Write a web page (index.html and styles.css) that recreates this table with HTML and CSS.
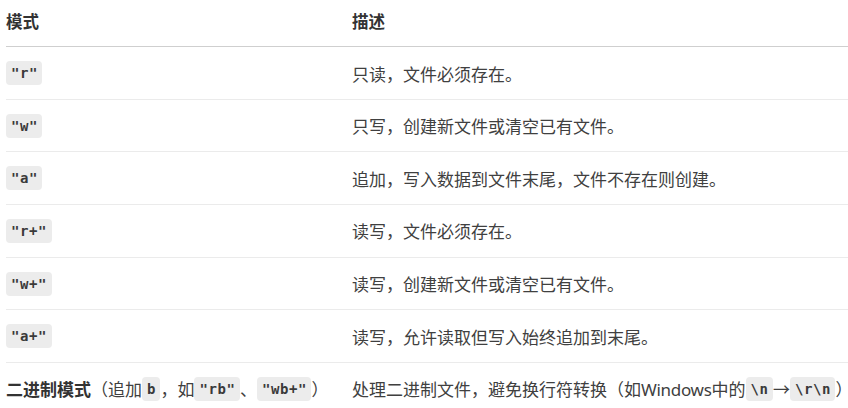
FILE: index.html
```html
<!DOCTYPE html>
<html lang="zh-CN">
<head>
<meta charset="utf-8">
<title>文件模式</title>
<link rel="stylesheet" href="styles.css">
</head>
<body>
<table class="modes">
  <thead>
    <tr><th class="c1"><div class="cell">模式</div></th><th class="c2"><div class="cell">描述</div></th></tr>
  </thead>
  <tbody>
    <tr><td><div class="cell"><code>"r"</code></div></td><td><div class="cell">只读，文件必须存在。</div></td></tr>
    <tr><td><div class="cell"><code>"w"</code></div></td><td><div class="cell">只写，创建新文件或清空已有文件。</div></td></tr>
    <tr><td><div class="cell"><code>"a"</code></div></td><td><div class="cell">追加，写入数据到文件末尾，文件不存在则创建。</div></td></tr>
    <tr><td><div class="cell"><code>"r+"</code></div></td><td><div class="cell">读写，文件必须存在。</div></td></tr>
    <tr><td><div class="cell"><code>"w+"</code></div></td><td><div class="cell">读写，创建新文件或清空已有文件。</div></td></tr>
    <tr><td><div class="cell"><code>"a+"</code></div></td><td><div class="cell">读写，允许读取但写入始终追加到末尾。</div></td></tr>
    <tr><td><div class="cell"><strong>二进制模式</strong><span>（追加</span><code>b</code><span>，如</span><code>"rb"</code><span>、</span><code>"wb+"</code><span>）</span></div></td><td><div class="cell"><span>处理二进制文件，避免换行符转换（如<span class="latin">Windows</span>中的</span><code>\n</code><span class="arrow">→</span><code>\r\n</code><span>）</span></div></td></tr>
  </tbody>
</table>
</body>
</html>
```
FILE: styles.css
```css
html, body {
  margin: 0;
  padding: 0;
  background: #ffffff;
}
body {
  font-family: "Noto Sans", "Noto Sans CJK SC", sans-serif;
  font-size: 17px;
  color: #404040;
}
.modes {
  border-collapse: collapse;
  margin-left: 6px;
  width: 842px;
  table-layout: fixed;
}
.cell {
  display: flex;
  align-items: center;
  height: 24px;
  white-space: nowrap;
}
.modes th {
  text-align: left;
  font-weight: 700;
  font-size: 16.5px;
  color: #333333;
  padding: 9px 0 13px;
  border-bottom: 1px solid #cfcfcf;
}
.modes .c1 { width: 346px; }
.modes td {
  padding: 14px 0 13.67px;
  border-bottom: 1px solid #ebebeb;
  vertical-align: middle;
}
.modes strong {
  font-weight: 700;
  color: #333333;
}
.modes code {
  display: block;
  font-family: "DejaVu Sans Mono", "Liberation Mono", monospace;
  font-weight: 700;
  font-size: 14px;
  letter-spacing: 0.6px;
  line-height: 24px;
  height: 24px;
  padding: 0 4.4px 0 5px;
  border-radius: 4px;
  background: #ececec;
  color: #3a3a3a;
}
.latin {
  letter-spacing: -0.3px;
}
.arrow {
  padding: 0;
}
```
